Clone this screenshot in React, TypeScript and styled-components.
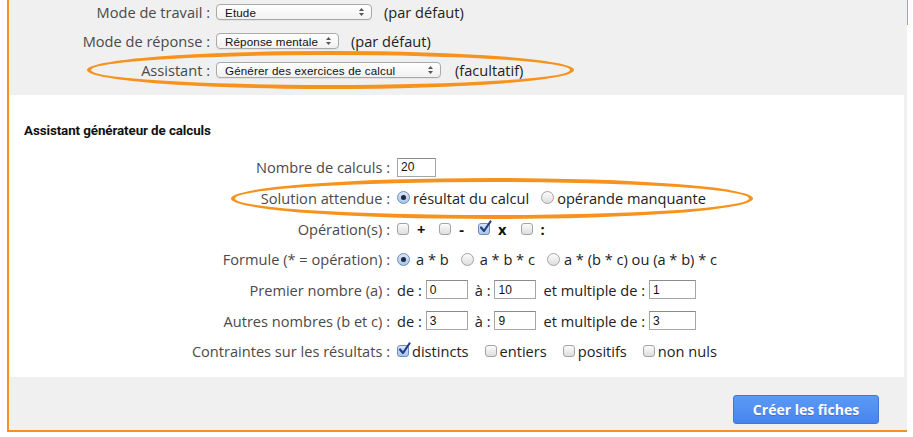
import styled, { createGlobalStyle } from "styled-components";

const GlobalStyle = createGlobalStyle`
  body {
    margin: 0;
    background: #fff;
    font-family: "Open Sans", "Liberation Sans", sans-serif;
  }
`;

const ORANGE = "#f7921c";

function Arrows() {
  return (
    <svg width="7" height="10" viewBox="0 0 7 10">
      <path d="M3.5 1 L6 4 L1 4 Z" fill="#555" />
      <path d="M3.5 9 L6 6 L1 6 Z" fill="#555" />
    </svg>
  );
}

function Tick() {
  return (
    <svg width="15" height="15" viewBox="0 0 15 15">
      <path d="M3 7.5 L6 11 L12.5 1.5" stroke="#213f7c" strokeWidth="2.2" fill="none" strokeLinecap="round" strokeLinejoin="round" />
    </svg>
  );
}

function Choice({ checked, label, gap }: { checked?: boolean; label: string; gap?: number }) {
  return (
    <Option $gap={gap}>
      <Radio $checked={checked} />
      <span>{label}</span>
    </Option>
  );
}

function Box({ checked, label, gap, bold }: { checked?: boolean; label: string; gap?: number; bold?: boolean }) {
  return (
    <Option $gap={gap}>
      <Check $checked={checked}>{checked ? <Tick /> : null}</Check>
      {bold ? <OpSymbol>{label}</OpSymbol> : <span>{label}</span>}
    </Option>
  );
}

function App() {
  return (
    <>
      <GlobalStyle />
      <Page>
        <TopForm>
          <TopRow>
            <TopLabel>Mode de travail :</TopLabel>
            <FakeSelect $width={156}>
              Etude
              <Arrows />
            </FakeSelect>
            <Note>(par défaut)</Note>
          </TopRow>
          <TopRow>
            <TopLabel>Mode de réponse :</TopLabel>
            <FakeSelect $width={123}>
              Réponse mentale
              <Arrows />
            </FakeSelect>
            <Note>(par défaut)</Note>
          </TopRow>
          <TopRow>
            <TopLabel>Assistant :</TopLabel>
            <FakeSelect $width={225}>
              Générer des exercices de calcul
              <Arrows />
            </FakeSelect>
            <Note $gap={14}>(facultatif)</Note>
          </TopRow>
        </TopForm>

        <Panel>
          <PanelTitle>Assistant générateur de calculs</PanelTitle>
          <FieldGrid>
            <FieldLabel>Nombre de calculs :</FieldLabel>
            <Controls>
              <NumInput $width={39} defaultValue="20" />
            </Controls>

            <FieldLabel>Solution attendue :</FieldLabel>
            <Controls $gap={12}>
              <Choice checked label="résultat du calcul" gap={3} />
              <Choice label="opérande manquante" gap={3} />
            </Controls>

            <FieldLabel>Opération(s) :</FieldLabel>
            <Controls $gap={14}>
              <Box label="+" gap={8} bold />
              <Box label="-" gap={8} bold />
              <Box checked label="x" gap={8} bold />
              <Box label=":" gap={8} bold />
            </Controls>

            <FieldLabel>Formule (* = opération) :</FieldLabel>
            <Controls $gap={12}>
              <Choice checked label="a * b" gap={6} />
              <Choice label="a * b * c" gap={6} />
              <Choice label="a * (b * c) ou (a * b) * c" gap={4} />
            </Controls>

            <FieldLabel>Premier nombre (a) :</FieldLabel>
            <Controls $gap={4}>
              <span>de :</span>
              <NumInput $width={42} defaultValue="0" />
              <Spacer>à :</Spacer>
              <NumInput $width={42} defaultValue="10" />
              <Spacer>et multiple de :</Spacer>
              <NumInput $width={47} defaultValue="1" />
            </Controls>

            <FieldLabel>Autres nombres (b et c) :</FieldLabel>
            <Controls $gap={4}>
              <span>de :</span>
              <NumInput $width={42} defaultValue="3" />
              <Spacer>à :</Spacer>
              <NumInput $width={42} defaultValue="9" />
              <Spacer>et multiple de :</Spacer>
              <NumInput $width={47} defaultValue="3" />
            </Controls>

            <FieldLabel>Contraintes sur les résultats :</FieldLabel>
            <Controls $gap={16}>
              <Box checked label="distincts" gap={3} />
              <Box label="entiers" gap={3} />
              <Box label="positifs" gap={3} />
              <Box label="non nuls" gap={3} />
            </Controls>
          </FieldGrid>
        </Panel>

        <Footer>
          <CreateButton>Créer les fiches</CreateButton>
        </Footer>

        <Ellipse $left={78} $top={51} $w={487} $h={38} />
        <Ellipse $left={222} $top={178} $w={522} $h={41} />
      </Page>
    </>
  );
}

const Page = styled.div`
  position: relative;
  margin-left: 7px;
  width: 898px;
  background: #f0f0f0;
  border-left: 2px solid ${ORANGE};
  border-bottom: 2px solid ${ORANGE};
  &::after {
    content: "";
    position: absolute;
    top: 0;
    right: -1px;
    width: 1px;
    height: 25px;
    background: ${ORANGE};
  }
`;

const TopForm = styled.div`
  display: flex;
  flex-direction: column;
  gap: 11px;
  padding-top: 3px;
  padding-bottom: 16px;
`;

const TopRow = styled.div`
  display: flex;
  align-items: center;
  height: 18px;
`;

const TopLabel = styled.span`
  width: 201px;
  text-align: right;
  font-size: 14.6px;
  color: #4a4a4a;
  margin-right: 6px;
`;

const FakeSelect = styled.div<{ $width: number }>`
  box-sizing: border-box;
  width: ${(p) => p.$width}px;
  height: 16px;
  display: flex;
  align-items: center;
  justify-content: space-between;
  padding: 0 6px 0 8px;
  border: 1px solid #a9a9a9;
  border-radius: 4px;
  background: linear-gradient(#ffffff, #f1f1f1);
  box-shadow: 0 1px 0 rgba(0, 0, 0, 0.05);
  font-family: "Liberation Sans", Arial, sans-serif;
  font-size: 11.6px;
  letter-spacing: 0.15px;
  color: #111;
`;

const Note = styled.span<{ $gap?: number }>`
  margin-left: ${(p) => p.$gap ?? 12}px;
  font-size: 14.6px;
  color: #222;
`;

const Panel = styled.div`
  margin-left: 1px;
  width: 894px;
  background: #fff;
  padding: 28px 0 10px;
`;

const PanelTitle = styled.div`
  padding-left: 14px;
  font-family: Roboto, "Open Sans", sans-serif;
  font-weight: 700;
  font-size: 13.4px;
  letter-spacing: -0.1px;
  line-height: 16px;
  color: #111;
  margin-bottom: 13px;
`;

const FieldGrid = styled.div`
  display: grid;
  grid-template-columns: 380px 1fr;
  grid-auto-rows: 30.67px;
  column-gap: 7px;
  align-items: center;
`;

const FieldLabel = styled.span`
  text-align: right;
  font-size: 14.6px;
  color: #4a4a4a;
`;

const Controls = styled.div<{ $gap?: number }>`
  display: flex;
  align-items: center;
  gap: ${(p) => p.$gap ?? 0}px;
  font-size: 14.6px;
  color: #222;
`;

const Spacer = styled.span`
  margin-left: 3px;
`;

const Option = styled.label<{ $gap?: number }>`
  display: inline-flex;
  align-items: center;
  gap: ${(p) => p.$gap ?? 4}px;
`;

const Radio = styled.span<{ $checked?: boolean }>`
  position: relative;
  box-sizing: border-box;
  width: 13px;
  height: 13px;
  border-radius: 50%;
  border: 1px solid ${(p) => (p.$checked ? "#6f8db8" : "#a3a3a3")};
  background: ${(p) =>
    p.$checked ? "linear-gradient(#d8e6f8, #a9c6ec)" : "linear-gradient(#fbfbfb, #dedede)"};
  &::after {
    content: "";
    display: ${(p) => (p.$checked ? "block" : "none")};
    position: absolute;
    left: 3px;
    top: 3px;
    width: 5px;
    height: 5px;
    border-radius: 50%;
    background: #1e2a3e;
  }
`;

const Check = styled.span<{ $checked?: boolean }>`
  position: relative;
  box-sizing: border-box;
  width: 12px;
  height: 12px;
  border-radius: 3px;
  border: 1px solid ${(p) => (p.$checked ? "#6f8db8" : "#a3a3a3")};
  background: ${(p) =>
    p.$checked ? "linear-gradient(#d8e6f8, #a9c6ec)" : "linear-gradient(#fbfbfb, #dedede)"};
  svg {
    position: absolute;
    left: -1px;
    top: -4px;
  }
`;

const OpSymbol = styled.span`
  font-weight: 700;
  color: #111;
`;

const NumInput = styled.input<{ $width: number }>`
  box-sizing: border-box;
  width: ${(p) => p.$width}px;
  height: 19px;
  padding: 1px 3px;
  border: 1px solid #a6a6a6;
  border-top-color: #8a8a8a;
  font-family: "Liberation Sans", Arial, sans-serif;
  font-size: 12px;
  color: #111;
  background: #fff;
  outline: none;
`;

const Footer = styled.div`
  display: flex;
  justify-content: flex-end;
  padding: 18px 28px 6px 0;
`;

const CreateButton = styled.button`
  width: 146px;
  height: 29px;
  border: 1px solid #3d78dc;
  border-radius: 3px;
  background: linear-gradient(#5b99f6, #4785ee);
  color: #fff;
  font-family: "Open Sans", sans-serif;
  font-weight: 700;
  font-size: 14px;
  text-shadow: 0 1px 0 rgba(0, 0, 0, 0.2);
  cursor: pointer;
`;

const Ellipse = styled.div<{ $left: number; $top: number; $w: number; $h: number }>`
  position: absolute;
  left: ${(p) => p.$left}px;
  top: ${(p) => p.$top}px;
  width: ${(p) => p.$w}px;
  height: ${(p) => p.$h}px;
  box-sizing: border-box;
  border: 4px solid ${ORANGE};
  border-radius: 50%;
  pointer-events: none;
`;

export default App;
